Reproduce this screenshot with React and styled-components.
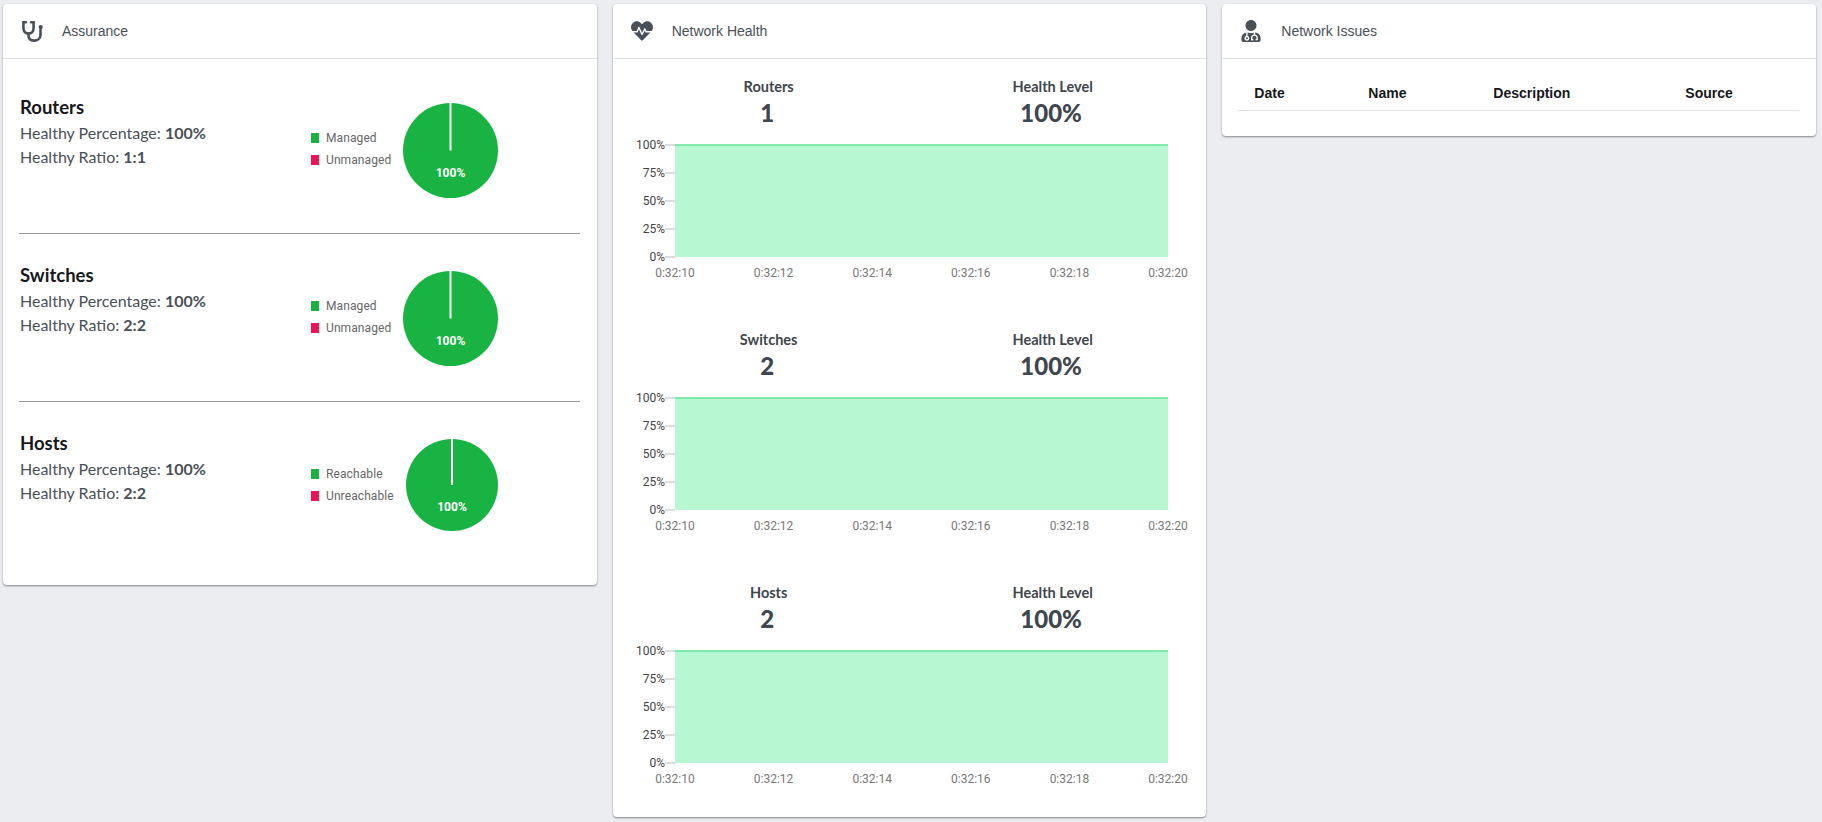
import styled, { createGlobalStyle } from 'styled-components';
import { FaHeartbeat, FaUserMd } from 'react-icons/fa';

const GlobalStyle = createGlobalStyle`
    body {
        margin: 0;
        background: #ebedf1;
        font-family: "Liberation Sans", Arial, sans-serif;
    }
`;

const assurance = [
    { name: 'Routers', ratio: '1:1', good: 'Managed', bad: 'Unmanaged', size: 95 },
    { name: 'Switches', ratio: '2:2', good: 'Managed', bad: 'Unmanaged', size: 95 },
    { name: 'Hosts', ratio: '2:2', good: 'Reachable', bad: 'Unreachable', size: 92 },
];

const health = [
    { name: 'Routers', count: 1 },
    { name: 'Switches', count: 2 },
    { name: 'Hosts', count: 2 },
];

const StethoscopeIcon = () => (
    <svg width="23" height="23" viewBox="0 0 23 23" fill="none" stroke="#495057" strokeWidth="2.6" strokeLinecap="round">
        <path d="M5 2.2H2.4V8C2.4 11.5 4.5 13.5 7.5 13.5C10.5 13.5 12.6 11.5 12.6 8V2.2H10" />
        <path d="M7.5 13.5V15.5C7.5 19 10 20.6 13 20.6C16 20.6 19.5 19 19.5 15V9" />
        <circle cx="19.7" cy="7" r="1.3" fill="#495057" strokeWidth="1.6" />
    </svg>
);

const Pie = ({ size }) => {
    const r = size / 2;
    return (
        <svg width={size} height={size} viewBox={`0 0 ${size} ${size}`}>
            <circle cx={r} cy={r} r={r} fill="#18b342" />
            <line x1={r} y1="0" x2={r} y2={r} stroke="#fff" strokeWidth="2" />
            <PieLabel x={r} y={r + 23}>100%</PieLabel>
        </svg>
    );
};

const AreaChart = () => {
    const left = 62;
    const right = 555;
    const top = 10;
    const bottom = 122;
    const yTicks = ['100%', '75%', '50%', '25%', '0%'];
    const xTicks = ['0:32:10', '0:32:12', '0:32:14', '0:32:16', '0:32:18', '0:32:20'];
    return (
        <svg width="593" height="150" style={{ display: 'block' }}>
            <rect x={left} y={top} width={right - left} height={bottom - top} fill="#b7f8d3" />
            <line x1={left} y1={top} x2={right} y2={top} stroke="#5fe597" strokeWidth="1.5" />
            {yTicks.map((t, i) => {
                const y = top + ((bottom - top) / 4) * i;
                return (
                    <g key={t}>
                        <line x1={left - 10} y1={y} x2={left} y2={y} stroke="#bbb" />
                        <YTick x={left - 10} y={y + 4}>{t}</YTick>
                    </g>
                );
            })}
            {xTicks.map((t, i) => (
                <XTick key={t} x={left + ((right - left) / 5) * i} y={142}>{t}</XTick>
            ))}
        </svg>
    );
};

const App = () => {
    return (
        <Page>
            <GlobalStyle />
            <Card>
                <CardHeader>
                    <IconSlot><StethoscopeIcon /></IconSlot>
                    <CardTitle>Assurance</CardTitle>
                </CardHeader>
                <AssuranceBody>
                    {assurance.map((item) => (
                        <Section key={item.name}>
                            <Summary>
                                <SectionTitle>{item.name}</SectionTitle>
                                <Stat>Healthy Percentage: <b>100%</b></Stat>
                                <Stat>Healthy Ratio: <b>{item.ratio}</b></Stat>
                            </Summary>
                            <PieArea>
                                <Legend>
                                    <LegendItem><Swatch $color="#18b342" />{item.good}</LegendItem>
                                    <LegendItem><Swatch $color="#f0134f" />{item.bad}</LegendItem>
                                </Legend>
                                <PieBox><Pie size={item.size} /></PieBox>
                            </PieArea>
                        </Section>
                    ))}
                </AssuranceBody>
            </Card>
            <Card>
                <CardHeader>
                    <IconSlot><FaHeartbeat size={22} color="#495057" /></IconSlot>
                    <CardTitle>Network Health</CardTitle>
                </CardHeader>
                <HealthBody>
                    {health.map((item) => (
                        <HealthRow key={item.name}>
                            <Figures>
                                <Figure>
                                    <FigureLabel>{item.name}</FigureLabel>
                                    <FigureValue>{item.count}</FigureValue>
                                </Figure>
                                <Figure>
                                    <FigureLabel>Health Level</FigureLabel>
                                    <FigureValue>100%</FigureValue>
                                </Figure>
                            </Figures>
                            <AreaChart />
                        </HealthRow>
                    ))}
                </HealthBody>
            </Card>
            <Card>
                <CardHeader>
                    <IconSlot><FaUserMd size={22} color="#495057" /></IconSlot>
                    <CardTitle>Network Issues</CardTitle>
                </CardHeader>
                <TableBody>
                    <IssuesTable>
                        <thead>
                            <tr>
                                <Th $width={114}>Date</Th>
                                <Th $width={125}>Name</Th>
                                <Th $width={192}>Description</Th>
                                <Th>Source</Th>
                            </tr>
                        </thead>
                    </IssuesTable>
                </TableBody>
            </Card>
        </Page>
    );
};

const Page = styled.div`
    display: grid;
    grid-template-columns: repeat(3, 1fr);
    gap: 16px;
    align-items: start;
    padding: 4px 6px 0 3px;
    height: 822px;
    overflow: hidden;
    box-sizing: border-box;
`;

const Card = styled.div`
    background: #fff;
    border-radius: 4px;
    box-shadow: 0 1px 2px rgba(0, 0, 0, 0.45);
`;

const CardHeader = styled.div`
    display: flex;
    align-items: center;
    height: 54px;
    padding-left: 18px;
    border-bottom: 1px solid #e2e3ea;
`;

const IconSlot = styled.div`
    display: flex;
    width: 41px;
`;

const CardTitle = styled.div`
    font-size: 14px;
    color: #495057;
`;

const AssuranceBody = styled.div`
    padding: 7px 17px 16px 16px;
`;

const Section = styled.div`
    display: flex;
    height: 138px;
    padding-top: 29px;
    border-bottom: 1px solid #999;

    &:last-child {
        border-bottom: 0;
    }
`;

const Summary = styled.div`
    width: 292px;
    padding-left: 1px;
    box-sizing: border-box;
    font-family: Lato, "Open Sans", sans-serif;
`;

const SectionTitle = styled.div`
    font-size: 18.5px;
    font-weight: 700;
    line-height: 24px;
    color: #16181b;
    margin-bottom: 2px;
`;

const Stat = styled.div`
    font-size: 16px;
    line-height: 24px;
    color: #495057;

    b {
        font-weight: 700;
    }
`;

const PieArea = styled.div`
    display: flex;
    justify-content: space-between;
    align-items: flex-start;
    width: 187px;
`;

const Legend = styled.div`
    margin-top: 32px;
`;

const LegendItem = styled.div`
    display: flex;
    align-items: center;
    height: 22px;
    font-family: Roboto, sans-serif;
    font-size: 12px;
    letter-spacing: 0.1px;
    color: #666;
`;

const Swatch = styled.span`
    width: 8px;
    height: 10px;
    margin-right: 7px;
    background: ${(props) => props.$color};
`;

const PieBox = styled.div`
    display: flex;
    margin-top: 8px;
`;

const PieLabel = styled.text`
    font-family: Roboto, sans-serif;
    font-size: 12px;
    font-weight: 700;
    fill: #fff;
    text-anchor: middle;
    dominant-baseline: middle;
`;

const YTick = styled.text`
    font-family: Roboto, sans-serif;
    font-size: 12px;
    fill: #444;
    text-anchor: end;
`;

const XTick = styled.text`
    font-family: Roboto, sans-serif;
    font-size: 12px;
    fill: #777;
    text-anchor: middle;
`;

const HealthBody = styled.div`
    padding: 18px 0 26px;
`;

const HealthRow = styled.div`
    height: 253px;

    &:last-child {
        height: 208px;
    }
`;

const Figures = styled.div`
    display: grid;
    grid-template-columns: 284px 284px;
    padding-left: 14px;
    height: 58px;
`;

const Figure = styled.div`
    text-align: center;
    font-family: Lato, "Open Sans", sans-serif;
    color: #40464d;
`;

const FigureLabel = styled.div`
    font-size: 14.5px;
    font-weight: 700;
    line-height: 20px;
`;

const FigureValue = styled.div`
    font-size: 24px;
    font-weight: 900;
    line-height: 32px;
    padding-right: 3px;
`;

const TableBody = styled.div`
    padding: 17px 17px 25px 16px;
`;

const IssuesTable = styled.table`
    width: 100%;
    table-layout: fixed;
    border-collapse: collapse;
`;

const Th = styled.th`
    width: ${(props) => (props.$width ? `${props.$width}px` : 'auto')};
    height: 34px;
    padding: 0 0 0 16px;
    box-sizing: border-box;
    text-align: left;
    font-size: 14px;
    font-weight: 700;
    color: #16181b;
    border-bottom: 1px solid #e2e3ea;
`;

export default App;
